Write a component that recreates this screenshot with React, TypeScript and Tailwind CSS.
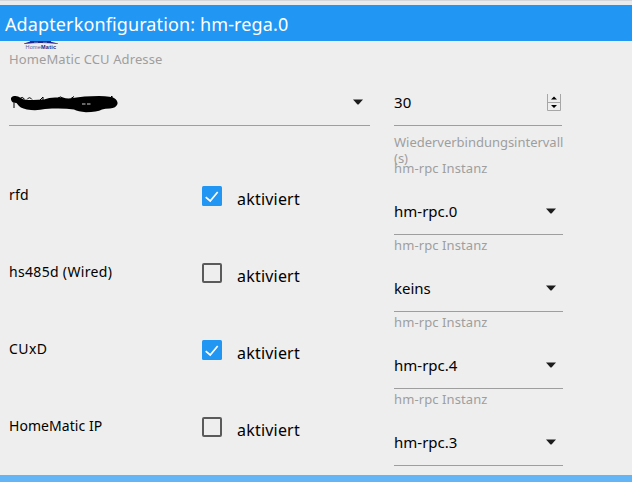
import { useState } from "react";

type TService = {
  name: string;
  enabled: boolean;
  instance: string;
  spacing: string;
};

const services: TService[] = [
  {
    name: "rfd",
    enabled: true,
    instance: "hm-rpc.0",
    spacing: "tracking-[0.2px]",
  },
  {
    name: "hs485d (Wired)",
    enabled: false,
    instance: "keins",
    spacing: "tracking-[0.32px]",
  },
  {
    name: "CUxD",
    enabled: true,
    instance: "hm-rpc.4",
    spacing: "tracking-[0.4px]",
  },
  {
    name: "HomeMatic IP",
    enabled: false,
    instance: "hm-rpc.3",
    spacing: "tracking-[0.05px]",
  },
];

const Caret = () => (
  <svg className="w-[10px] h-[6px] shrink-0" viewBox="0 0 10 6">
    <path d="M0 .5h10L5.500 5.500h-1z" fill="#1c1c1c" />
  </svg>
);

const Logo = () => (
  <svg
    className="block ml-[23px] w-[36px] h-[9px] shrink-0"
    viewBox="0 0 36 9"
  >
    <path d="M1 2.400L7 .6V0h21v.8l7 1.600v.6Q18 1 1 3z" fill="#25258c" />
    <path d="M11 1.300h4M20 1.300h4" stroke="#7f8fd0" strokeWidth=".7" />
    <text
      x="2.500"
      y="8"
      fontSize="5.500"
      fontFamily="Liberation Sans"
      fill="#5a5aa0"
      textLength="30.500"
    >
      Home
      <tspan fontWeight="bold" fill="#25257c">
        Matic
      </tspan>
    </text>
  </svg>
);

// address is blacked out by hand
const Scribble = () => (
  <svg
    className="absolute left-0 top-[8px] w-[112px] h-[22px]"
    viewBox="0 0 112 22"
  >
    <path
      d="M2 5.500Q1.500 2.500 5 2Q9 1.500 11 3.500Q14 5.500 18 6L24 6Q29 5.500 35 5.500Q40 3.500 46 3.500L54 3.500Q58 5 64 4Q74 2 90 2Q103 2.300 105 4Q109 6.500 108.500 10Q107 14 101 14.500Q96 14.500 93 15.500Q88 18.300 77 18.300Q69 17.500 65 15.500Q56 14 43 14.500L36 15Q30 16.500 22 16Q13 15 10 12L7.500 9Q2.500 9 2 5.500Z"
      fill="#000"
    />
    <path d="M5 8v6" stroke="#333" strokeWidth="1.300" />
    <path
      d="M11 4.500Q13 2 15.500 5M18 5.500Q20.500 2 23 5.500M31 6l3-3v3M49 4Q52 1.500 54 4.500M62 4.500l3-2M101 4l2-2v3"
      stroke="#000"
      fill="none"
    />
    <path d="M73 10h3.500M78 10h3.500" stroke="#ccc" strokeWidth="1" />
  </svg>
);

const Checkbox = ({ checked }: { checked: boolean }) =>
  checked ? (
    <svg className="w-5 h-5 shrink-0" viewBox="0 0 20 20">
      <rect width="20" height="20" rx="1.500" fill="#2196f3" />
      <path
        d="M3.700 11.200L8.200 15L15.700 6"
        fill="none"
        stroke="#fff"
        strokeWidth="1.700"
      />
    </svg>
  ) : (
    <div className="w-5 h-5 shrink-0 rounded-[2px] border-2 border-[#5a5a5a]" />
  );

const ServiceRow = ({ service }: { service: TService }) => {
  const [enabled, setEnabled] = useState(service.enabled);

  return (
    <div className="flex h-[77px]">
      <div
        className={`w-[193px] pt-[27px] text-[14px] leading-5 ${service.spacing}`}
      >
        {service.name}
      </div>
      <div
        className="flex w-[192px] pt-[28px]"
        onClick={() => setEnabled(!enabled)}
      >
        <Checkbox checked={enabled} />
        <span className="ml-[15px] mt-[3px] text-[16px] leading-5 tracking-[0.2px]">
          aktiviert
        </span>
      </div>
      <div className="w-[169px]">
        <div className="pt-[2px] text-[13px] leading-4 tracking-[0.1px] text-[#9e9e9e]">
          hm-rpc Instanz
        </div>
        <div className="flex items-center justify-between h-[59px] pt-[12px] pr-[7px] border-b border-[#9e9e9e]">
          <span className="text-[15px] leading-5">{service.instance}</span>
          <Caret />
        </div>
      </div>
    </div>
  );
};

const App = () => {
  return (
    <div
      className="flex flex-col w-[632px] h-[482px] overflow-hidden bg-[#eeeeee] text-black"
      style={{ fontFamily: '"Noto Sans", sans-serif' }}
    >
      <div className="h-[5px] shrink-0 bg-[#e9ebed] border-t border-[#d4d6da]" />
      <header className="flex items-center h-9 shrink-0 pl-[5px] pt-[2px] bg-[#2196f3] text-white text-[18px] tracking-[0.12px]">
        Adapterkonfiguration: hm-rega.0
      </header>

      <main className="flex flex-col grow">
        <Logo />
        <div className="flex h-[108px] pl-[9px]">
          <div className="w-[361px]">
            <div className="pt-[1px] text-[13px] leading-4 tracking-[0.1px] text-[#9e9e9e]">
              HomeMatic CCU Adresse
            </div>
            <div className="relative flex items-center justify-end h-[59px] pt-[12px] pb-[1px] pr-[7px] border-b border-[#9e9e9e]">
              <div className="absolute left-0 top-[19px]">
                <Scribble />
              </div>
              <Caret />
            </div>
          </div>
          <div className="w-[169px] ml-[24px]">
            <div className="flex items-center justify-between w-[168px] h-[76px] pt-[29px] border-b border-[#9e9e9e]">
              <span className="text-[15px] leading-5 tracking-[0.2px]">30</span>
              <svg className="w-[14px] h-[17px] mr-[1px]" viewBox="0 0 14 17">
                <path
                  d="M.5 0v16.500h13V0M0 8.500h14"
                  fill="none"
                  stroke="#a6a6a6"
                />
                <path d="M4 5.500h6L7 2.500zM4 11h6L7 14z" fill="#000" />
              </svg>
            </div>
            <div className="pt-[8px] text-[13px] leading-4 tracking-[-0.02px] text-[#9e9e9e]">
              Wiederverbindungsintervall (s)
            </div>
          </div>
        </div>
        <div className="pl-[9px]">
          {services.map((service) => (
            <ServiceRow key={service.name} service={service} />
          ))}
        </div>
      </main>

      <footer className="h-[7px] shrink-0 bg-[#64b5f6]" />
    </div>
  );
};

export default App;
